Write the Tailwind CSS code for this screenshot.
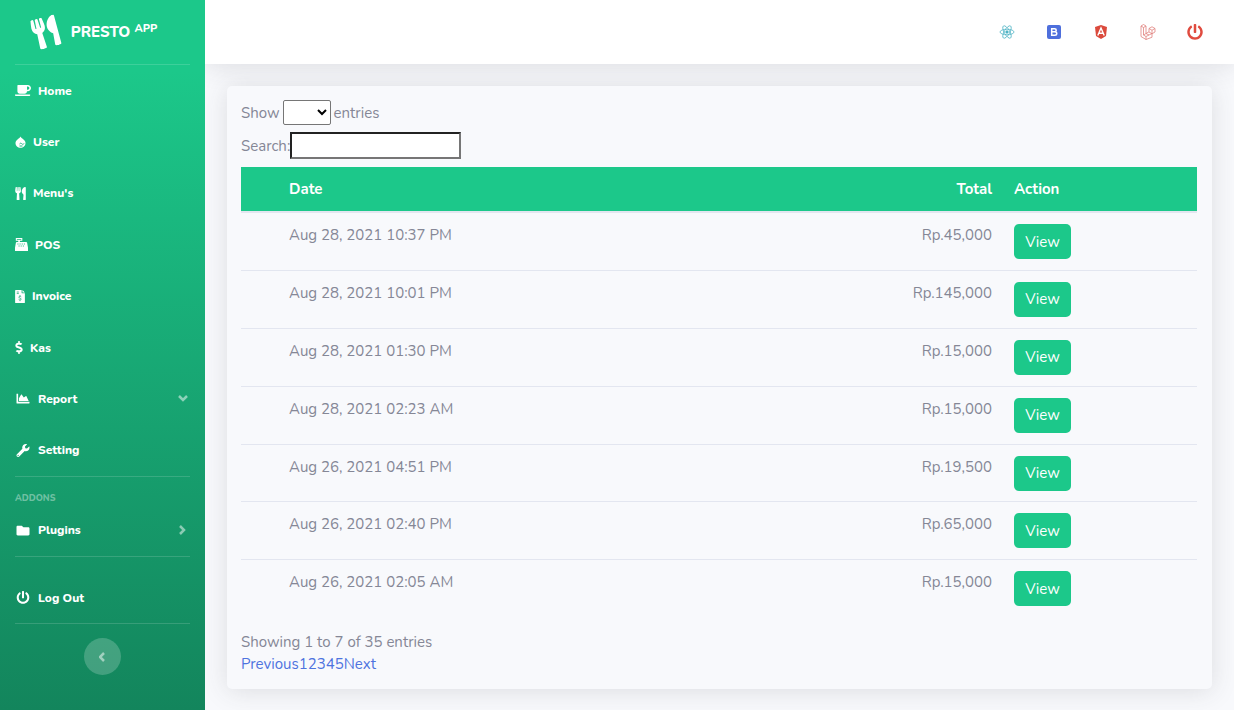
<!DOCTYPE html>
<html lang="en">
<head>
<meta charset="utf-8">
<meta name="viewport" content="width=device-width, initial-scale=1">
<title>Presto App</title>
<script src="https://cdn.jsdelivr.net/npm/@tailwindcss/browser@4"></script>
</head>
<body class="flex min-h-screen bg-[#f8f9fc] font-['Nunito','Open_Sans',sans-serif] text-[15px] leading-[22px] text-[#858796]">

<svg class="hidden" aria-hidden="true">
  <symbol id="utensils" viewBox="0 0 416 512"><path d="M207.9 15.2c.8 4.7 16.1 94.5 16.1 128.8 0 52.3-27.8 89.6-68.9 104.6L168 486.7c.7 13.7-10.2 25.3-24 25.3H80c-13.7 0-24.7-11.5-24-25.3l12.9-238.1C27.7 233.6 0 196.2 0 144 0 109.6 15.3 19.9 16.1 15.2 19.3-5.1 61.4-5.4 64 16.3v141.2c1.3 3.4 15.1 3.2 16 0 1.4-25.3 7.9-139.2 8-141.8 3.3-20.8 44.7-20.8 47.9 0 .2 2.7 6.6 116.5 8 141.8.9 3.2 14.8 3.4 16 0V16.3c2.6-21.6 44.8-21.4 47.9-1.1zm119.2 285.7l-15 185.1c-1.2 14 9.9 26 23.9 26h56c13.3 0 24-10.7 24-24V24c0-13.2-10.7-24-24-24-82.5 0-221.4 178.5-64.9 300.9z"/></symbol>
  <symbol id="power" viewBox="0 0 512 512"><path d="M400 54.1c63 45 104 118.6 104 201.9 0 136.8-110.8 247.7-247.5 248C120 504.3 8.2 393 8 256.4 7.9 173.1 48.9 99.3 111.8 54.2c11.7-8.3 28-4.8 35 7.7L162.6 90c5.9 10.5 3.1 23.8-6.6 31-41.5 30.8-68 79.6-68 134.9-.1 92.3 74.5 168.1 168 168.1 91.6 0 168.6-74.2 168-169.1-.3-51.8-24.7-101.8-68.1-134-9.7-7.2-12.4-20.5-6.5-30.9l15.8-28.1c7-12.4 23.2-16.1 34.8-7.8zM296 264V24c0-13.3-10.7-24-24-24h-32c-13.3 0-24 10.7-24 24v240c0 13.3 10.7 24 24 24h32c13.3 0 24-10.7 24-24z"/></symbol>
</svg>

<aside class="relative z-10 flex w-[205px] shrink-0 flex-col bg-linear-to-b from-[#1cc88a] from-10% to-[#13855c] px-[15px] text-[12px] font-extrabold text-white">
  <a href="#" class="flex h-16 items-center justify-center gap-3 pr-4 text-[15px]">
    <svg class="h-[31px] w-[27px] -rotate-15 fill-current" aria-hidden="true"><use href="#utensils"/></svg>
    <span>PRESTO <sup class="text-[11px]">APP</sup></span>
  </a>
  <hr class="border-white/15">
  <nav class="grid h-[411px] auto-rows-fr">
    <a href="#" class="flex items-center gap-[7px]"><svg class="h-[13px] w-4 fill-current" viewBox="0 0 640 512" aria-hidden="true"><path d="M192 384h192c53 0 96-43 96-96h32c70.6 0 128-57.4 128-128S582.6 32 512 32H120c-13.3 0-24 10.7-24 24v232c0 53 43 96 96 96zM512 96c35.3 0 64 28.7 64 64s-28.7 64-64 64h-32V96h32zm47.7 384H48.3c-47.6 0-61-64-36-64h583.3c25 0 11.8 64-35.9 64z"/></svg>Home</a>
    <a href="#" class="flex items-center gap-[7px]"><svg class="h-3 w-[11px]" viewBox="0 0 22 24" aria-hidden="true"><path fill="currentColor" d="M11 1c1 2.500 3 3.500 5.500 5.500C19.500 8.800 21 11.500 21 14c0 5.500-4.500 9.500-10 9.500S1 19.500 1 14c0-2.500 1.500-5.200 4.500-7.500C8 4.500 10 3.500 11 1z"/><path fill="none" stroke="#1dbb82" stroke-width="2" d="M9 16c2-3 4-1 5 0s3 1 4-1M9 20h6"/></svg>User</a>
    <a href="#" class="flex items-center gap-[7px]"><svg class="h-[13px] w-[11px] fill-current" aria-hidden="true"><use href="#utensils"/></svg>Menu's</a>
    <a href="#" class="flex items-center gap-[7px]"><svg class="h-[13px] w-[13px]" viewBox="0 0 512 512" aria-hidden="true"><path fill="currentColor" fill-rule="evenodd" d="M32 0h256v112H192v48h250c18 0 32 12 35 28l35 200v124H0V388l35-200c3-16 17-28 35-28h58v-48H32zM72 40v32h176V40zM96 216v40h40v-40zm84 0v40h40v-40zm84 0v40h40v-40zm84 0v40h40v-40zM140 296v40h40v-40zm84 0v40h40v-40zm84 0v40h40v-40z"/></svg>POS</a>
    <a href="#" class="flex items-center gap-[7px]"><svg class="h-[13px] w-[10px]" viewBox="0 0 384 512" aria-hidden="true"><path fill="currentColor" d="M24 0h232v104c0 13 11 24 24 24h104v360c0 13-11 24-24 24H24c-13 0-24-11-24-24V24C0 11 11 0 24 0zm264 0l96 96h-96z"/><path fill="none" stroke="#1bab78" stroke-width="30" d="M64 80h80M64 140h80M192 200v40m0 160v40m50-170c-20-28-100-28-100 10 0 50 100 30 100 80 0 40-80 40-104 8"/></svg>Invoice</a>
    <a href="#" class="flex items-center gap-[7px]"><svg class="h-[13px] w-2 fill-current" viewBox="0 0 288 512" aria-hidden="true"><path d="M209.2 233.4l-108-31.6C88.7 198.2 80 186.5 80 173.5c0-16.3 13.2-29.5 29.5-29.5h66.300c12.200 0 24.200 3.700 34.200 10.500 6.100 4.100 14.300 3.100 19.500-2l34.800-34c7.100-6.900 6.100-18.400-1.800-24.500C238 74.800 207.400 64.100 176 64V16c0-8.800-7.200-16-16-16h-32c-8.800 0-16 7.200-16 16v48h-2.500C45.800 64-5.400 118.700.5 183.600c4.200 46.100 39.400 83.600 83.800 96.600l102.500 30c12.500 3.700 21.200 15.300 21.200 28.300 0 16.300-13.200 29.500-29.500 29.500h-66.300C100 368 88 364.300 78 357.500c-6.100-4.100-14.300-3.100-19.500 2l-34.800 34c-7.100 6.900-6.100 18.400 1.800 24.500 24.500 19.200 55.100 29.900 86.500 30v48c0 8.800 7.200 16 16 16h32c8.800 0 16-7.200 16-16v-48.200c46.600-.9 90.300-28.600 105.700-72.700 21.500-61.600-14.600-124.800-72.500-141.700z"/></svg>Kas</a>
    <a href="#" class="flex items-center gap-[7px]"><svg class="h-[13px] w-4 fill-current" viewBox="0 0 512 512" aria-hidden="true"><path d="M500 384c6.600 0 12 5.400 12 12v40c0 6.600-5.400 12-12 12H12c-6.600 0-12-5.400-12-12V76c0-6.600 5.400-12 12-12h40c6.600 0 12 5.400 12 12v308h436zM372.700 159.500L288 216l-85.300-113.700c-5.100-6.800-15.500-6.300-19.900 1L96 248v104h384l-89.900-187.800c-3.200-6.500-11.400-8.700-17.400-4.700z"/></svg>Report<svg class="mr-[2px] ml-auto h-[7px] w-[10px] fill-none stroke-white/50" stroke-width="2.500" viewBox="0 0 10 7" aria-hidden="true"><path d="M1 1l4 4 4-4"/></svg></a>
    <a href="#" class="flex items-center gap-[7px]"><svg class="h-[13px] w-4 fill-current" viewBox="0 0 512 512" aria-hidden="true"><path d="M507.730 109.100c-2.240-9.030-13.540-12.090-20.120-5.510l-74.360 74.360-67.880-11.310-11.310-67.880 74.360-74.360c6.620-6.620 3.430-17.900-5.660-20.160-47.380-11.740-99.550.91-136.580 37.930-39.640 39.640-50.550 97.100-34.050 147.200L18.740 402.760c-24.990 24.990-24.990 65.510 0 90.500 24.990 24.990 65.510 24.990 90.500 0l213.210-213.210c50.120 16.710 107.470 5.680 147.370-34.220 37.070-37.070 49.700-89.320 37.910-136.730zM64 472c-13.250 0-24-10.750-24-24 0-13.260 10.750-24 24-24s24 10.740 24 24c0 13.250-10.750 24-24 24z"/></svg>Setting</a>
  </nav>
  <hr class="border-white/15">
  <h2 class="mt-[15px] text-[9px] leading-3 text-white/40">ADDONS</h2>
  <a href="#" class="flex h-[52px] items-center gap-[7px]"><svg class="h-[13px] w-4 fill-current" viewBox="0 0 512 512" aria-hidden="true"><path d="M464 128H272l-64-64H48C21.500 64 0 85.500 0 112v288c0 26.500 21.500 48 48 48h416c26.500 0 48-21.500 48-48V176c0-26.500-21.500-48-48-48z"/></svg>Plugins<svg class="mr-1 ml-auto h-[10px] w-[7px] fill-none stroke-white/50" stroke-width="2.500" viewBox="0 0 7 10" aria-hidden="true"><path d="M1 1l4 4-4 4"/></svg></a>
  <hr class="mb-[15px] border-white/15">
  <a href="#" class="flex h-[51px] items-center gap-[7px]"><svg class="h-[13px] w-4 fill-current" aria-hidden="true"><use href="#power"/></svg>Log Out</a>
  <hr class="border-white/15">
  <button type="button" aria-label="Collapse sidebar" class="mt-[14px] flex size-[37px] items-center justify-center self-center rounded-full bg-white/20"><svg class="h-[10px] w-[7px] fill-none stroke-white/50" stroke-width="2.500" viewBox="0 0 7 10" aria-hidden="true"><path d="M5 1L1 5l4 4"/></svg></button>
</aside>

<div class="flex min-w-0 flex-1 flex-col">
  <header class="flex h-16 items-center justify-end gap-[31px] bg-white pr-[31px] shadow-[0_2px_26px_rgba(58,59,69,0.15)]">
    <a href="#" aria-label="React"><svg class="size-4 fill-none stroke-[#4fb3c4]" viewBox="0 0 32 32" stroke-width="1.500" aria-hidden="true"><ellipse cx="16" cy="16" rx="14" ry="5.500"/><ellipse cx="16" cy="16" rx="14" ry="5.500" transform="rotate(60 16 16)"/><ellipse cx="16" cy="16" rx="14" ry="5.500" transform="rotate(120 16 16)"/><circle cx="16" cy="16" r="2.500" fill="#4fb3c4"/></svg></a>
    <a href="#" aria-label="Bootstrap"><svg class="size-4" viewBox="0 0 16 16" aria-hidden="true"><rect x="1" y="1" width="14" height="14" rx="2" fill="#4e6fdc"/><path fill="none" stroke="#fff" stroke-width="1.500" d="M5.700 4.700h2.900c2.200 0 2.200 3.100 0 3.100H5.700zm0 3.100h3.100c2.600 0 2.600 3.500 0 3.500H5.700z"/></svg></a>
    <a href="#" aria-label="Angular"><svg class="size-4" viewBox="0 0 16 16" aria-hidden="true"><path fill="#db4a3c" d="M8 1l6 2-1 9-5 3-5-3-1-9z"/><path fill="none" stroke="#fff" stroke-width="1.400" d="M4.800 11.500L8 4l3.200 7.500M6 9.300h4"/></svg></a>
    <a href="#" aria-label="Laravel"><svg class="size-4 fill-none stroke-[#df7c78]" viewBox="0 0 32 32" stroke-width="1.500" stroke-linejoin="round" aria-hidden="true"><path d="M2 4l5-3 5 3v15l6-3.500V9l6-3.500L30 9v7l-6 3.500v7L12 31 2 25zM2 4l5 3 5-3M7 7v15l5 3 12-6M12 19l-5 3m5 3v6M18 9l6 3.500L30 9M24 12.500v7L18 16m-6 3l6 3"/></svg></a>
    <a href="#" aria-label="Log out"><svg class="size-4 fill-[#e04b3f]" aria-hidden="true"><use href="#power"/></svg></a>
  </header>

  <main class="px-[22px] pt-[22px] pb-[21px]">
    <section class="rounded-[5px] bg-[#f8f9fc] py-[14px] pr-[15px] pl-[14px] shadow-[0_2px_26px_rgba(58,59,69,0.15)]">
      <label class="flex items-center gap-[3px]">Show
        <select class="h-[25px] w-12 rounded-[2px] border border-[#767676] bg-white text-black"><option></option><option>10</option><option>25</option></select>
        entries</label>
      <label class="mt-[7px] flex items-center">Search:<input type="search" class="h-[27px] w-[171px] border-2 border-[#767676] border-t-[#222] border-l-[#222] bg-white px-1 text-black"></label>
      <table class="mt-2 h-[450px] w-full table-fixed border-collapse">
        <colgroup><col class="w-[37px]"><col><col><col class="w-[194px]"></colgroup>
        <thead class="bg-[#1cc88a] text-left text-white">
          <tr class="h-[45px] border-b-2 border-[#e3e6f0]"><th></th><th class="px-[11px]">Date</th><th class="px-[11px] text-right">Total</th><th class="px-[11px]">Action</th></tr>
        </thead>
        <tbody id="orders" class="divide-y divide-[#e3e6f0] align-top"></tbody>
      </table>
      <p class="mt-[14px]">Showing 1 to 7 of 35 entries</p>
      <nav class="flex text-[#4e73df]" aria-label="Pages"><a href="#">Previous</a><a href="#">1</a><a href="#">2</a><a href="#">3</a><a href="#">4</a><a href="#">5</a><a href="#">Next</a></nav>
    </section>
  </main>
</div>

<script>
const orders = [
  ["Aug 28, 2021 10:37 PM", "45,000"],
  ["Aug 28, 2021 10:01 PM", "145,000"],
  ["Aug 28, 2021 01:30 PM", "15,000"],
  ["Aug 28, 2021 02:23 AM", "15,000"],
  ["Aug 26, 2021 04:51 PM", "19,500"],
  ["Aug 26, 2021 02:40 PM", "65,000"],
  ["Aug 26, 2021 02:05 AM", "15,000"],
];
document.getElementById("orders").innerHTML = orders.map(([date, total]) => `
  <tr>
    <td></td>
    <td class="px-[11px] pt-[11px]">${date}</td>
    <td class="px-[11px] pt-[11px] text-right">Rp.${total}</td>
    <td class="px-[11px] pt-[11px]"><button type="button" class="h-[35px] w-[57px] rounded-[5px] bg-[#1cc88a] text-white">View</button></td>
  </tr>`).join("");
</script>
</body>
</html>
